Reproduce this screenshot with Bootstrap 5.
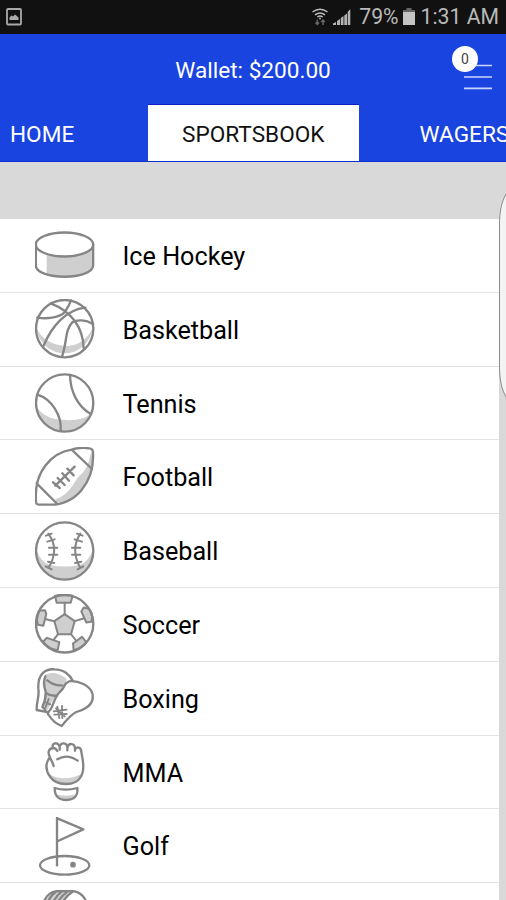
<!DOCTYPE html>
<html lang="en">
<head>
<meta charset="utf-8">
<meta name="viewport" content="width=device-width, initial-scale=1">
<title>Sportsbook</title>
<link href="https://cdn.jsdelivr.net/npm/bootstrap@5.3.0/dist/css/bootstrap.min.css" rel="stylesheet">
<style>
body{font-family:Roboto,sans-serif;background:#d9d9d9;color:#000}
.screen{width:506px;height:900px}
.status{height:33.5px;background:#111;color:#b9b9b9;font-size:21.2px;line-height:37px;padding:0 7px 0 6px}
.status .clock{margin-left:6px}
.topbar{height:70px;background:#1944df;color:#fff;font-size:22.6px}
.wallet{padding-top:1px;line-height:71px}
.menu-btn{right:12px;top:12px;width:42px;height:46px}
.count{left:0;top:0;width:26px;height:26px;font-size:14px;padding-top:2px;color:#444}
.tabs{height:58.500px;background:#1944df;border-bottom:1px solid #0b2fd0;font-size:22.6px}
.tabs a{color:#fff;text-decoration:none;line-height:61px;height:57.500px;white-space:nowrap;flex:none}
.tabs .tab-home{width:147.5px;padding-left:10px}
.tabs a.tab-on{width:211.5px;background:#fff;color:#111;border-top:1px solid #0a22c8;line-height:59px}
.tabs .tab-wagers{padding-left:60.5px}
.strip{height:57px}
.sports{width:499px}
.sport{height:73.8px;padding:0 0 0 35px;border:0;border-bottom:1px solid #e2e2e2;border-radius:0;font-size:25.2px;color:#000;gap:27.5px}
.sport span{padding-top:3px}
.sport svg{width:60px;height:60px;fill:none;stroke:#858585;stroke-width:7;stroke-linejoin:round;stroke-linecap:round}
.sport svg .sh{fill:#cfcfcf;stroke:none}
.edge{left:499px;top:189px;width:40px;height:213px;background:#f3f3f3;border:1px solid #8c8c8c;border-radius:14px/34px}
</style>
<script src="https://cdn.jsdelivr.net/npm/bootstrap@5.3.0/dist/js/bootstrap.bundle.min.js"></script>
</head>
<body>
<div class="screen position-relative overflow-hidden">
  <div class="status d-flex align-items-center justify-content-between">
    <svg width="16" height="18" viewBox="0 0 16 18"><rect x="1" y="1" width="14" height="15.5" rx="1" fill="none" stroke="#aaa" stroke-width="1.8"/><path d="M3.5 12V9.5l2-2 1.5 1 2-2 3.500 3V12z" fill="#aaa"/></svg>
    <div class="d-flex align-items-center">
      <svg class="me-1" width="18" height="20" viewBox="0 0 18 20" fill="none" stroke="#bbb" stroke-width="1.5"><path d="M1.500 5Q9-.5 16.500 5M4 7.800Q9 4 14 7.800M6.300 10Q9 8 11.700 10"/><circle cx="9" cy="11.500" r=".9" fill="#bbb" stroke="none"/><path d="M6.300 12.500v5M4.500 15.500l1.800 2 1.800-2M12 18v-5M10.200 15l1.800-2 1.800 2" stroke="#666"/></svg>
      <svg width="18" height="20" viewBox="0 0 18 20" fill="#b4b4b4"><path d="M0 18v-1.500l3-1.500v3zM4 18v-4l3-2v6zM7.800 18v-7l2.700-2v9zM11.300 18V8.500l2.700-2V18zM14.700 18V5l2.600-3v16z"/></svg>
      <span class="ms-1 ps-1 pct">79%</span>
      <svg class="ms-1" width="12" height="19" viewBox="0 0 12 19"><path d="M3.500 1h5v2H12v3H0V3h3.500z" fill="#666"/><path d="M0 5h12v13H0z" fill="#c4c4c4"/></svg>
      <span class="clock">1:31 AM</span>
    </div>
  </div>
  <header class="topbar position-relative text-center">
    <div class="wallet">Wallet: $200.00</div>
    <div class="menu-btn position-absolute">
      <svg class="d-block" width="42" height="46" viewBox="0 0 42 46" stroke="#cbd6ff" stroke-width="1.700"><path d="M12 19.500h28M12 31h28M12 42.300h28"/></svg>
      <span class="count position-absolute rounded-circle bg-white d-flex align-items-center justify-content-center">0</span>
    </div>
  </header>
  <nav class="tabs d-flex">
    <a href="#" class="tab-home">HOME</a>
    <a href="#" class="tab-on text-center">SPORTSBOOK</a>
    <a href="#" class="tab-wagers">WAGERS</a>
  </nav>
  <div class="strip"></div>
  <div class="sports list-group rounded-0">
    <div class="sport list-group-item d-flex align-items-center">
      <svg viewBox="45 16.500 180 180"><path class="sh" d="M80 105Q130 122 219 88V140Q205 175 130 173L80 165z"/><ellipse cx="133.500" cy="75" rx="86" ry="36"/><path d="M47.500 75V138C50 183 217 183 219.500 138V75"/></svg>
      <span>Ice Hockey</span></div>
    <div class="sport list-group-item d-flex align-items-center">
      <svg viewBox="45 238 180 180"><path class="sh" d="M49 325A85 85 0 0 0 218 325Q195 373 145 379Q75 378 49 325z"/><circle cx="134" cy="327" r="86"/><path d="M92 251C155 275 190 325 191 386M153 242C148 256 144 263 138 271C130 290 93 300 52 294M71 378C95 320 138 270 196 264M126 411C142 362 135 330 157 308C172 298 199 301 217 312"/></svg>
      <span>Basketball</span></div>
    <div class="sport list-group-item d-flex align-items-center">
      <svg viewBox="45 20 180 180"><path class="sh" d="M50 122Q70 152 110 159Q185 168 210 144Q185 196 128 194Q62 190 50 122z"/><circle cx="134" cy="110" r="86"/><path d="M52 85C95 98 126 148 122 194M150 27C151 75 172 119 211 142"/></svg>
      <span>Tennis</span></div>
    <div class="sport list-group-item d-flex align-items-center">
      <svg viewBox="45 243 180 180"><path class="sh" d="M106 400C150 385 160 350 178 330Q205 310 211 265L219 255V308Q190 402 109 411z"/><path d="M155 251Q178 243 208 247Q219 248 219 260C224 350 165 418 88 416H58Q47 416 48 404C41 318 95 260 155 251zM155 251L216 309M50 352L109 411M106 359L164 302M99 349L119 366M113 336L134 357M127 322L147 344M142 308L161 328"/></svg>
      <span>Football</span></div>
    <div class="sport list-group-item d-flex align-items-center">
      <svg viewBox="45 20 180 180"><path class="sh" d="M49 105Q62 145 88 151Q134 162 180 151Q206 143 219 105Q219 190 134 194Q49 190 49 105z"/><circle cx="134" cy="110" r="86"/><path stroke-width="6" d="M85 58Q120 105 85 161M181 58Q150 105 181 161M78 64L95 58M82 82L104 75M87 100H112M87 121H112M84 142L103 146M77 156L95 165M188 64L171 58M186 82L164 75M181 100H156M181 121H156M184 142L165 146M190 156L173 165"/></svg>
      <span>Baseball</span></div>
    <div class="sport list-group-item d-flex align-items-center">
      <svg viewBox="45 241.500 180 180"><path d="M105 247L110 268H152L158 247Q131 239 105 247zM59 291L75 290L79 301L70 337L54 334Q46 314 59 291zM207 286L191 282L184 294L199 327L214 325Q221 302 207 286zM69 384L81 373L118 386L113 410Q85 407 69 384zM199 386L186 370L159 390L161 410Q187 404 199 386zM134 302L164 323L153 362H114L103 323z" fill="#cfcfcf" stroke-width="6"/><circle cx="134" cy="331" r="86"/><path stroke-width="6" d="M134 268V302M103 323L78 317M164 323L190 315M114 362L101 379M153 362L168 381"/></svg>
      <span>Soccer</span></div>
    <div class="sport list-group-item d-flex align-items-center">
      <svg viewBox="45 25 180 180"><path class="sh" d="M75 45Q105 30 140 57L138 72L105 110L80 155L67 142L76 92Q60 75 75 45z"/><path d="M86 158L50 151C49 125 59 110 55 87C53 46 72 27 104 29C130 29 150 45 159 65M76 151L67 142Q78 120 77 96Q68 70 76 50M82 62Q103 79 126 77M78 100Q92 110 110 108"/><path d="M147 65C175 62 210 77 217 101C224 131 200 148 169 157Q152 165 125 199Q101 190 86 166Q80 162 90 151C98 145 101 120 114 103Q130 88 137 72z" fill="#fff"/><path stroke-width="5.500" d="M73 127L91 134M86 118L76 144M112 141L118 175M126 139L127 175M101 155L140 150M103 165L140 163M108 146L134 170"/></svg>
      <span>Boxing</span></div>
    <div class="sport list-group-item d-flex align-items-center">
      <svg viewBox="45 246 180 180"><path class="sh" d="M85 341Q130 368 185 342Q170 377 132 374Q100 369 85 341zM106 403Q138 411 169 403Q166 418 138 419Q110 417 106 403z"/><path d="M101 318C97 303 91 299 89 289C82 276 87 264 101 264Q108 265 112 273M99 264C92 246 117 245 119 262C119 246 143 246 142 265C145 247 165 248 165 267C174 258 184 263 184 276C190 305 195 335 180 354C165 378 110 379 91 351C75 330 75 312 89 292M119 262V269M142 265V271M165 267V272M112 298C130 287 153 288 173 302M104 384Q138 394 172 384Q176 419 140 420Q103 420 104 384z"/></svg>
      <span>MMA</span></div>
    <div class="sport list-group-item d-flex align-items-center">
      <svg viewBox="45 30 180 180"><ellipse cx="134" cy="178" rx="74" ry="28"/><path stroke-linecap="butt" d="M111 181V33"/><path d="M112 37L190 70L114 105"/><circle cx="159" cy="176" r="5" fill="#777"/></svg>
      <span>Golf</span></div>
    <div class="sport list-group-item d-flex align-items-center">
      <svg viewBox="45 251 180 180"><path class="sh" d="M70 290Q80 254 105 254H158L120 300z"/><path d="M70 290C80 262 95 255 115 254H158Q190 258 200 290M83 290Q91 267 108 256M99 290Q107 270 125 256M112 290Q121 272 142 256M126 290Q140 267 158 256"/></svg>
    </div>
  </div>
  <div class="edge position-absolute"></div>
</div>
</body>
</html>
